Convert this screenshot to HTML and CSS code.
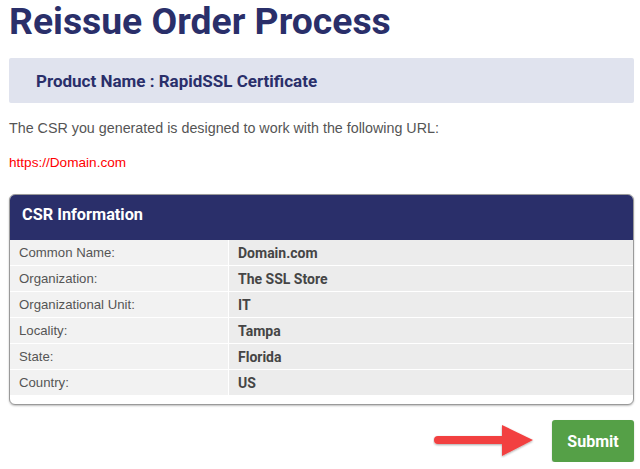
FILE: index.html
```html
<!DOCTYPE html>
<html>
<head>
<meta charset="utf-8">
<link rel="stylesheet" href="styles.css">
</head>
<body>
<div class="page">
  <h1 class="title">Reissue Order Process</h1>
  <div class="product">Product Name : RapidSSL Certificate</div>
  <p class="intro">The CSR you generated is designed to work with the following URL:</p>
  <p class="url">https://Domain.com</p>
  <div class="card">
    <div class="card-head">CSR Information</div>
    <div class="rows">
      <div class="row"><div class="label">Common Name:</div><div class="value">Domain.com</div></div>
      <div class="row"><div class="label">Organization:</div><div class="value">The SSL Store</div></div>
      <div class="row"><div class="label">Organizational Unit:</div><div class="value">IT</div></div>
      <div class="row"><div class="label">Locality:</div><div class="value">Tampa</div></div>
      <div class="row"><div class="label">State:</div><div class="value">Florida</div></div>
      <div class="row"><div class="label">Country:</div><div class="value">US</div></div>
    </div>
  </div>
  <div class="actions">
    <svg class="arrow" width="102" height="34" viewBox="0 0 102 34">
      <defs>
        <filter id="sh" x="-10%" y="-20%" width="120%" height="140%">
          <feGaussianBlur in="SourceAlpha" stdDeviation="1"/>
          <feOffset dx="0" dy="1"/>
          <feComponentTransfer><feFuncA type="linear" slope="0.35"/></feComponentTransfer>
          <feMerge><feMergeNode/><feMergeNode in="SourceGraphic"/></feMerge>
        </filter>
      </defs>
      <g filter="url(#sh)">
        <line x1="5" y1="16" x2="72" y2="16" stroke="#f2403f" stroke-width="8" stroke-linecap="round"/>
        <polygon points="69,1 100,16 69,32" fill="#f2403f"/>
      </g>
    </svg>
    <button class="submit" type="button">Submit</button>
  </div>
</div>
</body>
</html>
```

FILE: styles.css
```css
html, body {
  margin: 0;
  padding: 0;
  background: #ffffff;
}

.page {
  padding: 0 6px 0 9px;
  font-family: "Liberation Sans", Arial, sans-serif;
}

.title {
  margin: 0;
  font-family: Roboto, "Liberation Sans", sans-serif;
  font-weight: 700;
  font-size: 37.3px;
  line-height: 42px;
  color: #2a2f6a;
}

.product {
  margin-top: 16px;
  height: 45px;
  display: flex;
  align-items: center;
  padding: 0 27px;
  background: #e0e3ee;
  border-radius: 2px;
  font-family: Roboto, "Liberation Sans", sans-serif;
  font-weight: 700;
  font-size: 17px;
  color: #2a2f6a;
}

.intro {
  margin: 17px 0 0;
  font-size: 14.3px;
  line-height: 16px;
  color: #555555;
}

.url {
  margin: 19px 0 0;
  font-size: 13.6px;
  line-height: 16px;
  color: #ff0000;
}

.card {
  margin-top: 23px;
  border: 1px solid #9a9a9a;
  border-radius: 6px;
  overflow: hidden;
  background: #ffffff;
  box-shadow: 0 1px 2px rgba(0,0,0,0.25);
  padding-bottom: 9px;
}

.card-head {
  height: 35px;
  padding: 10px 0 0 12px;
  background: #2a2f6a;
  color: #ffffff;
  font-family: Roboto, "Liberation Sans", sans-serif;
  font-weight: 700;
  font-size: 16.3px;
  line-height: 20px;
}

.row {
  display: grid;
  grid-template-columns: 218px 1fr;
  column-gap: 1px;
  border-top: 1px solid #ffffff;
  background: #ffffff;
}

.row:first-child {
  border-top: 0;
}

.label, .value {
  height: 25px;
  display: flex;
  align-items: center;
}

.label {
  padding-left: 9px;
  background: #f2f2f2;
  color: #555555;
  font-size: 13.2px;
}

.value {
  padding-left: 9px;
  background: #ececec;
  color: #454545;
  font-family: Roboto, "Liberation Sans", sans-serif;
  font-weight: 700;
  font-size: 14px;
}

.actions {
  margin-top: 15px;
  display: flex;
  justify-content: flex-end;
  align-items: center;
  gap: 17px;
}

.arrow {
  display: block;
}

.submit {
  width: 82px;
  height: 42px;
  border: 0;
  border-radius: 3px;
  background: #55a047;
  color: #ffffff;
  font-family: Roboto, "Liberation Sans", sans-serif;
  font-weight: 700;
  font-size: 16px;
  box-shadow: 0 1px 2px rgba(0,0,0,0.2);
  padding: 0;
}
```
